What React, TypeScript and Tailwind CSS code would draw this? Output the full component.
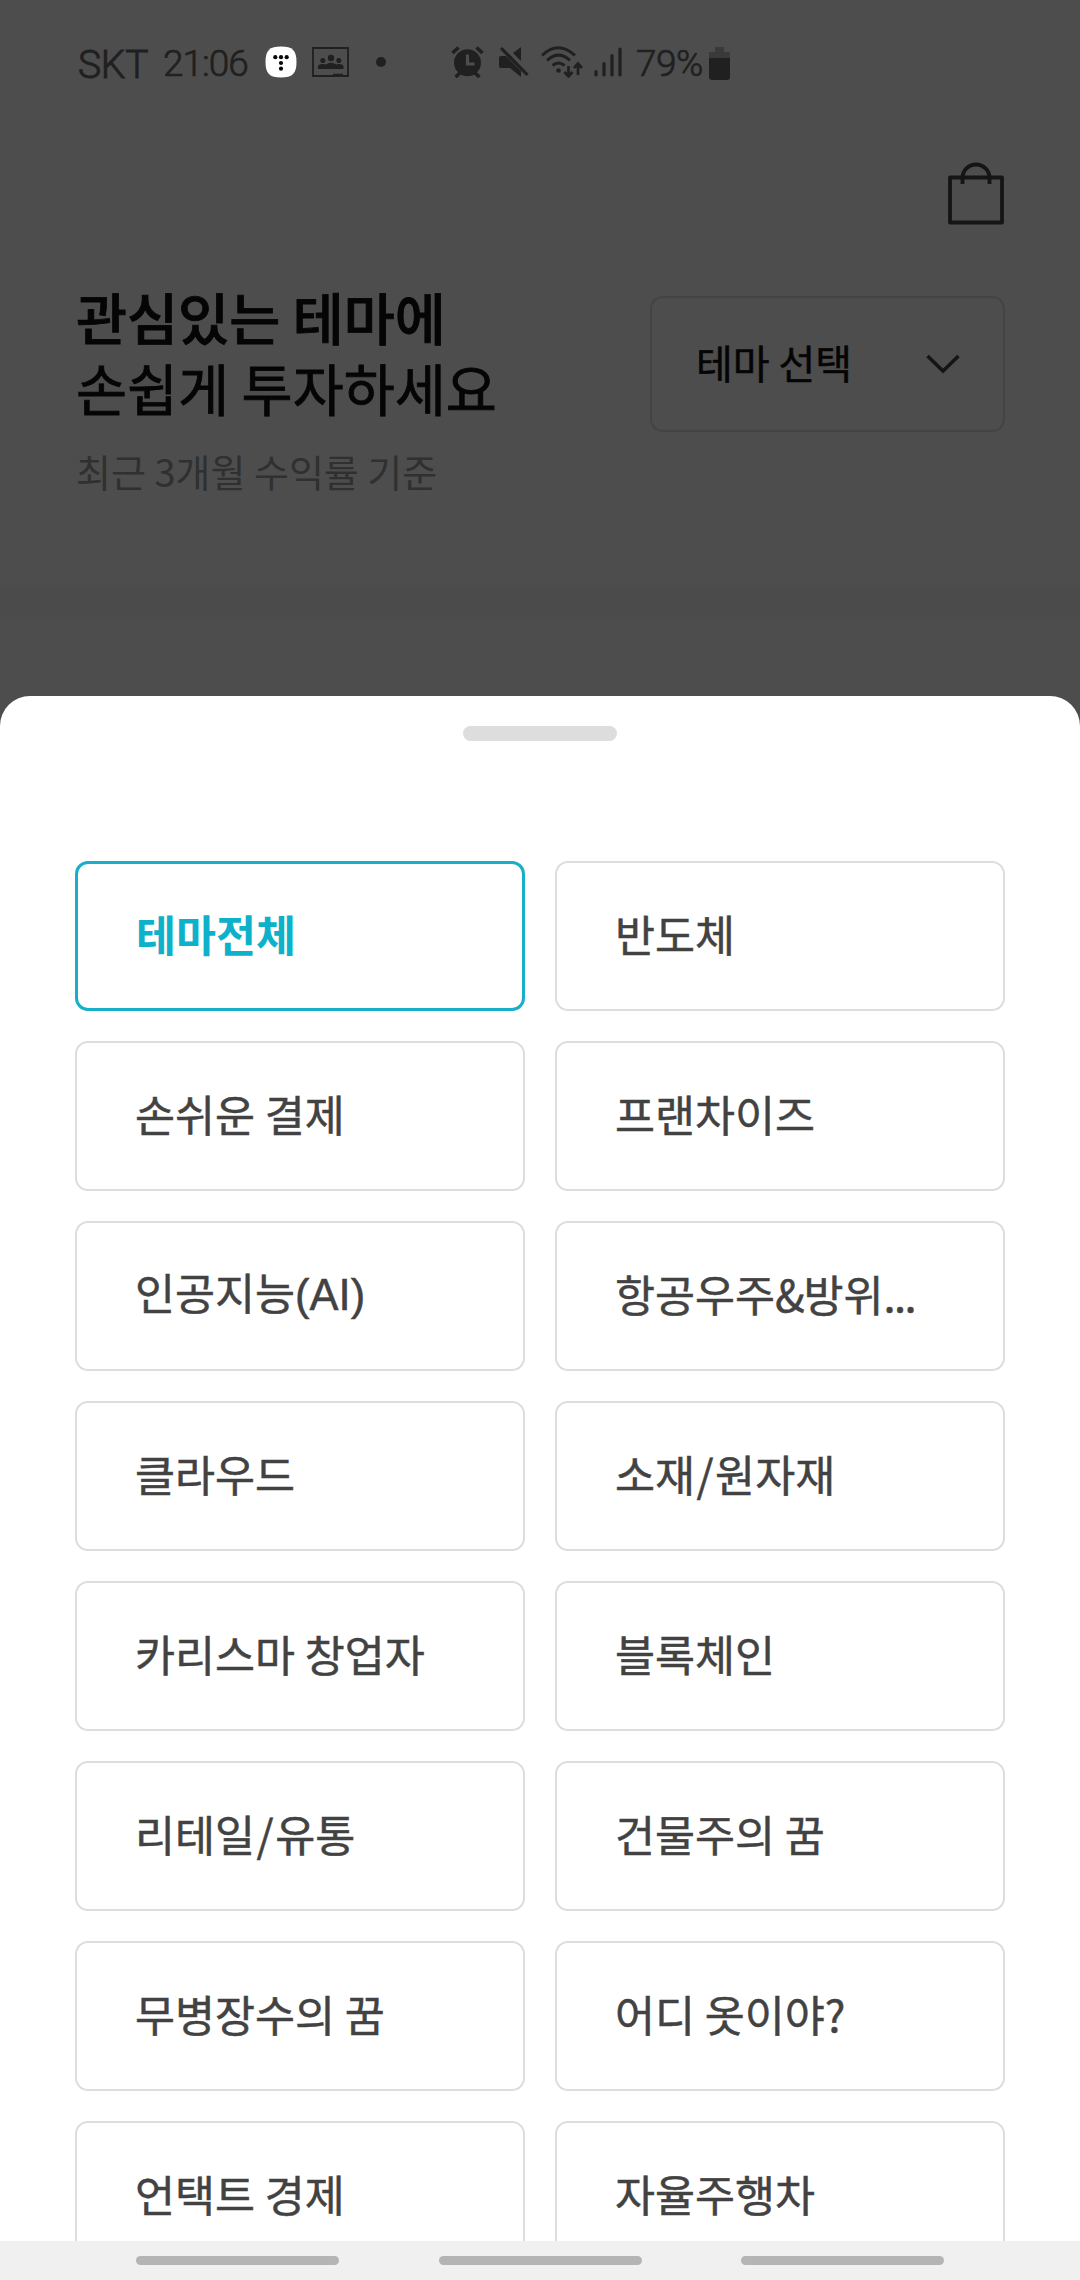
const themes = [
  '테마전체', '반도체', '손쉬운 결제', '프랜차이즈', '인공지능(AI)', '항공우주&방위...',
  '클라우드', '소재/원자재', '카리스마 창업자', '블록체인', '리테일/유통', '건물주의 꿈',
  '무병장수의 꿈', '어디 옷이야?', '언택트 경제', '자율주행차',
];

const latin: Record<string, string> = {
  '/': 'ml-[1.500px] tracking-[1.500px]',
  '&': 'tracking-[-1.3px]',
  '...': 'tracking-[-1.6px]',
  '(AI)': "font-['Liberation_Sans',sans-serif]",
};

function Label({ text }: { text: string }) {
  return (
    <span className="-mt-[4px]">
      {text.split(/(\/|&|\.\.\.|\(AI\))/).map((part, i) =>
        latin[part] ? <span key={i} className={latin[part]}>{part}</span> : part,
      )}
    </span>
  );
}

function StatusBar() {
  return (
    <div className="flex h-[124px] shrink-0 items-center pl-[78px] font-['Roboto','Noto_Sans_CJK_KR',sans-serif] text-[#202020]">
      <span className="mt-[6px] w-[85px] text-[39px] font-light tracking-[-0.3px] whitespace-nowrap [-webkit-text-stroke:0.9px_#202020]">SKT</span>
      <span className="mt-[3px] w-[102px] text-[37px] font-light tracking-[-1px] whitespace-nowrap [-webkit-text-stroke:0.7px_#202020]">21:06</span>
      <svg className="h-8 w-8 shrink-0" viewBox="0 0 32 32">
        <path d="M16 .5C27.500 .5 31.500 4.500 31.500 16S27.500 31.500 16 31.500 .5 27.500 .5 16 4.500 .5 16 .5Z" fill="#fff" />
        <g fill="#080808">
          <circle cx="10.300" cy="11.200" r="2.100" /><circle cx="16" cy="11.200" r="2.100" /><circle cx="21.700" cy="11.200" r="2.100" />
          <circle cx="16" cy="17" r="2.100" /><circle cx="16" cy="22.700" r="2.100" />
        </g>
      </svg>
      <svg className="ml-[15px] h-[30px] w-[37px] shrink-0" viewBox="0 0 37 30" fill="#202020">
        <path d="M1 1H36V29H1Z" fill="none" stroke="#202020" strokeWidth="1.800" />
        <circle cx="19" cy="11" r="3.200" /><circle cx="10.800" cy="13.500" r="2.500" /><circle cx="26.800" cy="13.500" r="2.500" />
        <path d="M6 22V19.500Q6 17 10.500 17Q13 17 14 17.500Q16 15.800 19 15.800T24 17.500Q25 17 27 17Q31.500 17 31.500 19.500V22ZM21 26.800H31V29H21Z" />
      </svg>
      <i className="ml-[27px] h-2.5 w-2.5 shrink-0 rounded-full bg-[#202020]" />
      <svg className="ml-[65px] h-[32px] w-[33px] shrink-0" viewBox="0 0 33 32" fill="#202020">
        <circle cx="16.500" cy="16.800" r="13.500" />
        <path d="M1.500 7 7.500 1.500M31.500 7 25.500 1.500M9 27 4.500 31M24 27 28.500 31" stroke="#202020" strokeWidth="3.600" />
        <path d="M16.500 8.500V18H23.500" fill="none" stroke="#4d4d4d" strokeWidth="3.200" />
      </svg>
      <svg className="ml-[15px] h-[32px] w-[30px] shrink-0" viewBox="0 0 30 32" fill="#202020">
        <path d="M0 12Q0 10 2 10H7L22 25V31L11 22H2Q0 22 0 20ZM14 7 22 1V15Z" />
        <path d="M2 2 28.500 29" stroke="#202020" strokeWidth="3.200" />
      </svg>
      <svg className="ml-[12px] h-[32px] w-[42px] shrink-0" viewBox="0 0 42 32" fill="none" stroke="#202020" strokeWidth="3">
        <path d="M1 9.500Q17-6 34 9.500M6 14.500Q17.500 3.800 29 14.500M11.500 19.500Q17.500 14.500 23.500 19.500" />
        <circle cx="17.500" cy="24.500" r="2.300" fill="#202020" stroke="none" />
        <path d="M27.500 20V30M23.500 26 27.500 30.500 31.500 26M37 29V18M33 22 37 17.500 41 22" strokeWidth="2.700" />
      </svg>
      <svg className="ml-[11px] h-[30px] w-[28px] shrink-0" viewBox="0 0 28 30" stroke="#202020" strokeWidth="3.200" strokeLinecap="round">
        <path d="M2 24.500V28M10 16.500V28M18 8.500V28M26 2V28" />
      </svg>
      <span className="mt-[3px] ml-[14px] w-[73px] text-[37px] font-light tracking-[-0.5px] whitespace-nowrap [-webkit-text-stroke:0.7px_#202020]">79%</span>
      <svg className="mt-[2px] h-[33px] w-[21px] shrink-0" viewBox="0 0 21 33">
        <path d="M6 0H15V5H21V12H0V5H6Z" fill="#3a3a3a" />
        <path d="M0 11H21V30Q21 33 18 33H3Q0 33 0 30Z" fill="#202020" />
      </svg>
    </div>
  );
}

export default function App() {
  return (
    <div className="flex h-[2280px] w-[1080px] flex-col overflow-hidden bg-[#4d4d4d] font-['Noto_Sans_CJK_KR',sans-serif]">
      <StatusBar />
      <header className="flex h-[164px] shrink-0 justify-end pt-[37px] pr-[75px]">
        <svg className="h-[64px] w-[58px]" viewBox="0 0 58 64" fill="none" stroke="#151515">
          <path d="M3 16.500H55V61.500H3Z" strokeWidth="3.800" strokeLinejoin="round" />
          <path d="M15.500 23V17A13.500 13.500 0 0 1 42.500 17V23" strokeWidth="3.800" />
        </svg>
      </header>
      <section className="flex h-[299px] shrink-0 justify-between px-[75px]">
        <div className="pl-px">
          <h1 className="-mt-[7px] text-[55.500px] leading-[71px] whitespace-nowrap text-[#050505]">
            <span className="block font-medium [-webkit-text-stroke:0.8px_#050505]">관심있는 테마에</span>
            <span className="block font-normal [-webkit-text-stroke:0.8px_#050505]">손쉽게 투자하세요</span>
          </h1>
          <p className="mt-[23px] text-[38px] leading-[50px] whitespace-nowrap text-[#303030]">최근 3개월 수익률 기준</p>
        </div>
        <button className="mt-[8px] flex h-[136px] w-[355px] items-center justify-between rounded-[13px] border-2 border-[#444] pr-[43px] pl-[44px] text-[40px] text-[#050505]">
          <span className="-mt-[4px] [-webkit-text-stroke:0.5px_#050505]">테마 선택</span>
          <svg className="h-[20px] w-[34px]" viewBox="0 0 34 20" fill="none" stroke="#151515" strokeWidth="3.500">
            <path d="M1.500 2 17 17 32.500 2" />
          </svg>
        </button>
      </section>
      <div className="h-[33px] shrink-0 bg-[#4b4b4b]" />
      <div className="h-[76px] shrink-0 bg-[#4d4d4d]" />
      <main className="flex h-[1545px] shrink-0 flex-col overflow-hidden rounded-t-[30px] bg-white">
        <div className="mx-auto mt-[30px] h-[15px] w-[154px] shrink-0 rounded-full bg-[#ddd]" />
        <div className="mt-[120px] grid shrink-0 grid-cols-2 gap-[30px] px-[75px]">
          {themes.map((t, i) => (
            <button
              key={t}
              className={
                i === 0
                  ? 'flex h-[150px] items-center rounded-[13px] border-3 border-[#18b0c8] pl-[58px] text-[43.500px] font-bold whitespace-nowrap text-[#0eb1ca]'
                  : 'flex h-[150px] items-center rounded-[13px] border-2 border-[#ddd] pl-[58px] text-[43.500px] font-normal whitespace-nowrap text-[#424242] [-webkit-text-stroke:0.5px_#424242]'
              }
            >
              <Label text={t} />
            </button>
          ))}
        </div>
      </main>
      <nav className="flex h-[39px] shrink-0 justify-center gap-[99.500px] bg-[#f0f0f0] pt-[15px]">
        <i className="h-[9px] w-[203px] rounded-full bg-[#b4b4b4]" />
        <i className="h-[9px] w-[203px] rounded-full bg-[#b4b4b4]" />
        <i className="h-[9px] w-[203px] rounded-full bg-[#b4b4b4]" />
      </nav>
    </div>
  );
}
